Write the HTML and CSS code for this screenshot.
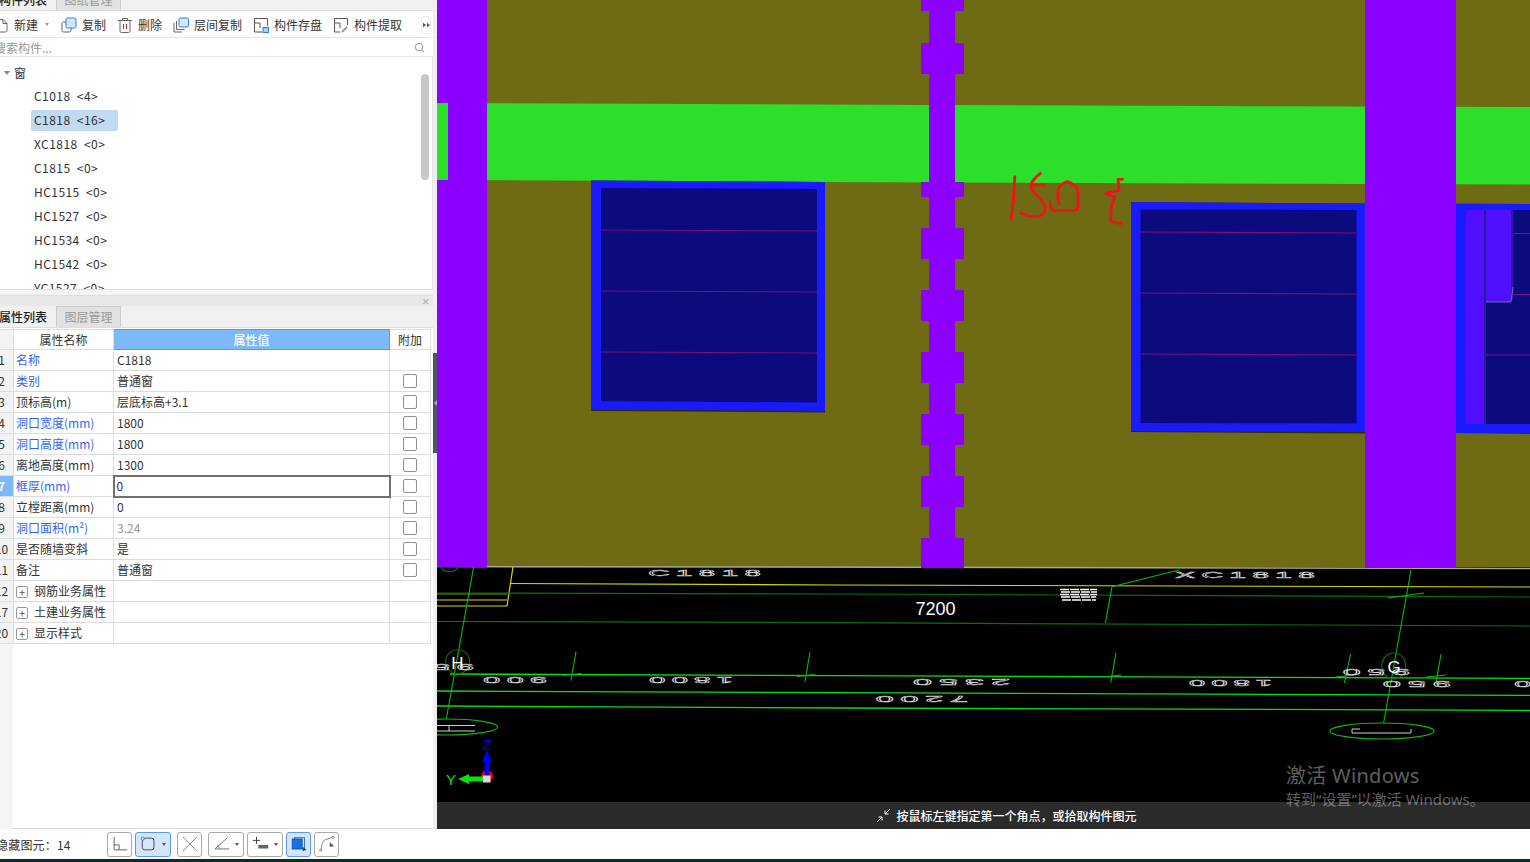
FILE: index.html
```html
<!DOCTYPE html>
<html lang="zh">
<head>
<meta charset="utf-8">
<title>窗 构件</title>
<link rel="stylesheet" href="styles.css">
</head>
<body>
<div class="app">
  <div class="main">
    <aside class="side">
      <div class="panel">
        <div class="tabs tabs-top">
          <span class="tab tab-on tab-clip">构件列表</span>
          <span class="tab tab-off">图纸管理</span>
        </div>
        <div class="toolbar">
          <span class="tool tool-new">
            <svg class="ico" viewBox="0 0 9 16"><path d="M0 2.500h4l4 4v7a1.500 1.500 0 0 1-1.500 1.500H0" fill="none" stroke="#666"/><path d="M4 2.500v4h4" fill="none" stroke="#666"/></svg>
            新建<i class="caret"></i>
          </span>
          <span class="tool">
            <svg class="ico" viewBox="0 0 16 16"><rect x="1" y="5" width="9" height="10" rx="1.500" fill="#fff" stroke="#666"/><rect x="5" y="1" width="10" height="10" rx="1.500" fill="#d6e6fa" stroke="#2f7de0"/></svg>
            复制
          </span>
          <span class="tool">
            <svg class="ico" viewBox="0 0 16 16"><path d="M1 3.500h14M5.500 3.500v-2h5v2M3 3.500v10.500a1.500 1.500 0 0 0 1.500 1.500h7a1.500 1.500 0 0 0 1.500-1.500V3.500" fill="none" stroke="#666"/><path d="M6.500 7v5M9.500 7v5" stroke="#d93030"/></svg>
            删除
          </span>
          <span class="tool">
            <svg class="ico" viewBox="0 0 16 16"><path d="M1 6v9h8M3.500 4v8.500h8" fill="none" stroke="#666"/><rect x="6" y="1" width="9.500" height="9" rx="1.500" fill="#d6e6fa" stroke="#2f7de0"/></svg>
            层间复制
          </span>
          <span class="tool">
            <svg class="ico" viewBox="0 0 16 16"><path d="M9 15H1.500V1.500h13V9M1.500 6H7v5" fill="none" stroke="#555"/><rect x="10" y="10.500" width="5.500" height="5" fill="#a9cdf5" stroke="#2f7de0"/></svg>
            构件存盘
          </span>
          <span class="tool">
            <svg class="ico" viewBox="0 0 16 16"><path d="M7 15H1.500V1.500h13V8M1.500 6H7v5" fill="none" stroke="#555"/><path d="M9 15l5-5" stroke="#999" stroke-width="2"/></svg>
            构件提取
          </span>
          <span class="more"><svg class="more-ico" viewBox="0 0 8 6"><path d="M0 0.500L3.500 3L0 5.500ZM4.500 0.500L8 3L4.500 5.500Z" fill="#555"/></svg></span>
        </div>
        <div class="search">
          <span>搜索构件...</span>
          <svg class="search-ico" viewBox="0 0 12 12"><circle cx="5.500" cy="5.500" r="4" fill="none" stroke="#aaa" stroke-width="1.300"/><path d="M8.500 8.500l2.500 2.500" stroke="#aaa" stroke-width="1.300"/></svg>
        </div>
        <div class="tree">
          <div class="tree-root"><i class="tree-caret"></i>窗</div>
          <div class="tree-item"><span class="label">C1018&nbsp; &lt;4&gt;</span></div>
          <div class="tree-item"><span class="label label-on">C1818&nbsp; &lt;16&gt;</span></div>
          <div class="tree-item"><span class="label">XC1818&nbsp; &lt;0&gt;</span></div>
          <div class="tree-item"><span class="label">C1815&nbsp; &lt;0&gt;</span></div>
          <div class="tree-item"><span class="label">HC1515&nbsp; &lt;0&gt;</span></div>
          <div class="tree-item"><span class="label">HC1527&nbsp; &lt;0&gt;</span></div>
          <div class="tree-item"><span class="label">HC1534&nbsp; &lt;0&gt;</span></div>
          <div class="tree-item"><span class="label">HC1542&nbsp; &lt;0&gt;</span></div>
          <div class="tree-item"><span class="label">YC1527&nbsp; &lt;0&gt;</span></div>
          <span class="tree-thumb"></span>
        </div>
      </div>
      <div class="panel panel-props">
        <div class="props-head"><span class="close">✕</span></div>
        <div class="tabs tabs-props">
          <span class="tab tab-on tab-clip2">属性列表</span>
          <span class="tab tab-off">图层管理</span>
        </div>
        <div class="table-wrap">
          <table class="props">
            <colgroup><col class="c-idx"><col class="c-name"><col class="c-val"><col class="c-add"></colgroup>
            <thead>
              <tr><th class="idx"></th><th>属性名称</th><th class="th-val">属性值</th><th>附加</th></tr>
            </thead>
            <tbody>
              <tr><td class="idx">1</td><td class="blue">名称</td><td>C1818</td><td></td></tr>
              <tr><td class="idx">2</td><td class="blue">类别</td><td>普通窗</td><td class="chk"><i class="box"></i></td></tr>
              <tr><td class="idx">3</td><td>顶标高(m)</td><td>层底标高+3.1</td><td class="chk"><i class="box"></i></td></tr>
              <tr><td class="idx">4</td><td class="blue">洞口宽度(mm)</td><td>1800</td><td class="chk"><i class="box"></i></td></tr>
              <tr><td class="idx">5</td><td class="blue">洞口高度(mm)</td><td>1800</td><td class="chk"><i class="box"></i></td></tr>
              <tr><td class="idx">6</td><td>离地高度(mm)</td><td>1300</td><td class="chk"><i class="box"></i></td></tr>
              <tr><td class="idx idx-on">7</td><td class="blue">框厚(mm)</td><td class="editing">0</td><td class="chk"><i class="box"></i></td></tr>
              <tr><td class="idx">8</td><td>立樘距离(mm)</td><td>0</td><td class="chk"><i class="box"></i></td></tr>
              <tr><td class="idx">9</td><td class="blue">洞口面积(m²)</td><td class="muted">3.24</td><td class="chk"><i class="box"></i></td></tr>
              <tr><td class="idx">10</td><td>是否随墙变斜</td><td>是</td><td class="chk"><i class="box"></i></td></tr>
              <tr><td class="idx">11</td><td>备注</td><td>普通窗</td><td class="chk"><i class="box"></i></td></tr>
              <tr><td class="idx">12</td><td class="group"><i class="plus">+</i>钢筋业务属性</td><td></td><td></td></tr>
              <tr><td class="idx">17</td><td class="group"><i class="plus">+</i>土建业务属性</td><td></td><td></td></tr>
              <tr><td class="idx">20</td><td class="group"><i class="plus">+</i>显示样式</td><td></td><td></td></tr>
            </tbody>
          </table>
          <div class="gutter"></div>
        </div>
      </div>
    </aside>
    <div class="splitter"><span class="handle"><i class="handle-arrow"></i></span></div>
    <section class="viewport">
      <svg class="scene" viewBox="437 0 1093 829" width="1093" height="829">
        <rect x="437" y="0" width="1093" height="829" fill="#000"/>
        <rect x="437" y="0" width="1093" height="567" fill="#6e6b14"/>
        <path d="M437 566.500L1530 568.500" stroke="#a8a890" stroke-width="1.500"/>
        <path d="M437 103L929 105L1530 107V184.500L929 182.500L437 180Z" fill="#2bdf2b"/>
        <!-- first window -->
        <path d="M591 180.500L825 182V412.500L591 411Z" fill="#2e2c10"/>
        <path d="M591 180.500L825 182V411L591 409.500Z" fill="#1a1aff"/>
        <path d="M601 188L817 189V402.500L601 401Z" fill="#0b0b7d"/>
        <path d="M601 230L817 231M601 291L817 292M601 352L817 353" stroke="#7b0f7b" stroke-width="1.200"/>
        <!-- second window -->
        <path d="M1131 202L1365 203.500V433.500L1131 432Z" fill="#2e2c10"/>
        <path d="M1131 202L1365 203.500V432L1131 431Z" fill="#1a1aff"/>
        <path d="M1140.500 209.500L1356.500 210V423.500L1140.500 423Z" fill="#0b0b7d"/>
        <path d="M1140.500 232L1356.500 233M1140.500 293L1356.500 294M1140.500 354L1356.500 355" stroke="#7b0f7b" stroke-width="1.200"/>
        <!-- third window -->
        <path d="M1456 203.500L1530 204V434L1456 433Z" fill="#1a1aff"/>
        <rect x="1466" y="210" width="64" height="214" fill="#0b0b7d"/>
        <rect x="1466" y="210" width="18" height="214" fill="#5010ff"/>
        <rect x="1484" y="210" width="2" height="214" fill="#2a1a9a"/>
        <rect x="1486" y="210" width="25" height="92" fill="#5010ff"/>
        <rect x="1511" y="210" width="2.500" height="90" fill="#2a1a9a"/>
        <path d="M1486 302H1511L1513 287" fill="none" stroke="#7b7bb0" stroke-width=".8"/>
        <path d="M1514 233.500H1530M1514 294.500H1530M1486 355H1530" stroke="#7b0f7b" stroke-width="1.200"/>
        <!-- columns -->
        <rect x="448" y="0" width="39" height="567" fill="#8b00ff"/>
        <rect x="437" y="0" width="11" height="103" fill="#8b00ff"/>
        <rect x="437" y="180" width="11" height="387" fill="#8b00ff"/>
        <rect x="929" y="0" width="26" height="567" fill="#8b00ff"/>
        <path fill="#8b00ff" d="M921 0h43v11h-43zM921 43h43v31h-43zM921 182h43v15h-43zM921 228h43v31h-43zM921 290h43v31h-43zM921 352h43v31h-43zM921 414h43v31h-43zM921 476h43v31h-43zM921 538h43v30h-43z"/>
        <rect x="1365" y="0" width="91" height="568" fill="#8b00ff"/>
        <!-- red sketch -->
        <g fill="none" stroke="#f01414" stroke-width="2.800" stroke-linecap="round" stroke-linejoin="round">
          <path d="M1014.800 176.700Q1014 198 1011.300 219.300"/>
          <path d="M1040.300 173.300Q1031 181 1030.600 186Q1032 191 1037 195Q1045 203 1045.500 209Q1045 214 1039 216Q1030 218 1021 213.300M1033 185H1044.400"/>
          <path d="M1058.900 204Q1057 194 1058.500 188Q1062 183 1067.500 181.700Q1075 184 1077.800 190Q1078.500 200 1077.800 208Q1077 210.500 1072 210.500H1055Q1050 210.500 1050.300 201.700"/>
          <path d="M1122.600 179.300H1118L1119 190.700L1105.400 193.300L1114.700 197.300L1111.200 206.700L1110.500 220Q1111 223 1121.500 223.300"/>
        </g>
        <!-- yellow plan lines -->
        <g fill="none" stroke="#d8d800" stroke-width="1.200">
          <path d="M513 567L507 606H437M507 600H437"/>
          <path d="M510 583.500L837 585L1530 587"/>
          <path d="M437 594H507" stroke="#8a8a00"/>
        </g>
        <!-- dark green lines -->
        <g fill="none" stroke="#0b700b" stroke-width="1.200">
          <path d="M437 593L840 594L1530 597"/>
          <path d="M437 621.500L840 622.700L1530 626"/>
        </g>
        <!-- bright green lines -->
        <g fill="none" stroke="#0fdc0f" stroke-width="1.300">
          <path d="M450 674L840 675.700L1530 678.300"/>
          <path d="M437 691L840 692.700L1530 695.300"/>
          <path d="M437 706L840 708L1530 710.300"/>
        </g>
        <g fill="none" stroke="#10b810" stroke-width="1.100">
          <path d="M576 651.700L571 680.700M810 652L805 681.700M1116 653L1110.700 682.700M1350.600 654L1344.400 683M1441 654L1436 683"/>
          <path d="M563 675.500L581 673.500M797 676.500L815 674.500M1103 677L1121 675M1336 677L1354 675M1426 677L1446 675"/>
          <path d="M473.700 566.700L446.300 719"/>
          <path d="M1411 570L1383.600 723"/>
          <path d="M1112 586.700L1179 570M1112 586.700L1105.400 623"/>
          <path d="M1388 598L1424 593"/>
          <ellipse cx="447" cy="727" rx="50.500" ry="8"/>
          <ellipse cx="1382" cy="731" rx="52" ry="8"/>
        </g>
        <g fill="none" stroke="#0b700b" stroke-width="1.100">
          <circle cx="457.700" cy="661.700" r="12"/>
          <ellipse cx="1393.700" cy="666" rx="12" ry="13"/>
          <path d="M440 565.500a10 9 0 0 0 19 0"/>
        </g>
        <!-- white plan dimensions -->
        <g class="plan">
          <text transform="translate(648 576) scale(1 .65)" textLength="119" lengthAdjust="spacingAndGlyphs">C1818</text>
          <text transform="translate(1175 578) scale(1 .65)" textLength="146" lengthAdjust="spacingAndGlyphs">XC1818</text>
          <text transform="translate(547 677) rotate(180) scale(1 .65)" textLength="70" lengthAdjust="spacingAndGlyphs">900</text>
          <text transform="translate(733 677) rotate(180) scale(1 .65)" textLength="90" lengthAdjust="spacingAndGlyphs">1800</text>
          <text transform="translate(1010 679) rotate(180) scale(1 .65)" textLength="104" lengthAdjust="spacingAndGlyphs">2350</text>
          <text transform="translate(1272 680) rotate(180) scale(1 .65)" textLength="89" lengthAdjust="spacingAndGlyphs">1800</text>
          <text transform="translate(968 696) rotate(180) scale(1 .65)" textLength="99" lengthAdjust="spacingAndGlyphs">7200</text>
          <text transform="translate(1410 669) rotate(180) scale(1 .65)" textLength="74" lengthAdjust="spacingAndGlyphs">950</text>
          <text transform="translate(1451 681) rotate(180) scale(1 .65)" textLength="75" lengthAdjust="spacingAndGlyphs">950</text>
          <text transform="translate(474 664) rotate(180) scale(1 .65)" textLength="72" lengthAdjust="spacingAndGlyphs">950</text>
          <text transform="translate(1531 681) rotate(180) scale(1 .65)" textLength="23" lengthAdjust="spacingAndGlyphs">0</text>
        </g>
        <path d="M1060 589.500H1097M1061 592H1097M1060 594.500H1097M1061 597H1096M1062 600H1096" stroke="#fff" stroke-width="1.600" stroke-dasharray="9 1"/>
        <path d="M437 725.500H475M437 731H475M449 725.500V731M1352 729V733H1411V729M1352 729H1360" fill="none" stroke="#ccc" stroke-width="1"/>
        <text class="grid-label" x="457.500" y="669">H</text>
        <text class="grid-label" x="1394" y="673">G</text>
        <text class="dim" x="935.500" y="615">7200</text>
        <!-- axis gizmo -->
        <circle cx="487" cy="776" r="6" fill="#e00"/>
        <path d="M487 750L492 762H489.500V778H484.500V762H482Z" fill="#0000f0"/>
        <path d="M458 779L469 774V776.500H487V781.500H469V784Z" fill="#0be00b"/>
        <rect x="483" y="775.500" width="7.500" height="7" fill="#ddd"/>
        <text class="axis axis-z" x="487" y="750">Z</text>
        <text class="axis axis-y" x="451" y="785">Y</text>
      </svg>
      <div class="hint">
        <svg class="hint-ico" viewBox="0 0 15 15"><path d="M1 14L6 9M2.500 9H6V12.500M14 1L9 6M12.500 6H9V2.500" fill="none" stroke="#fff" stroke-width="1"/></svg>
        按鼠标左键指定第一个角点，或拾取构件图元
      </div>
      <div class="watermark">
        <div class="wm-1">激活 Windows</div>
        <div class="wm-2">转到“设置”以激活 Windows。</div>
      </div>
    </section>
  </div>
  <footer class="status">
    <span class="hidden-count">隐藏图元：14</span>
    <div class="btns">
      <span class="btn"><svg class="b-ico" viewBox="0 0 20 20"><path d="M3.500 2V16.500H18M3.500 11H9V16.500" fill="none" stroke="#555"/></svg></span>
      <span class="btn btn-wide btn-on"><svg class="b-ico" viewBox="0 0 20 20"><rect x="2.500" y="3.500" width="13" height="13" rx="3" fill="none" stroke="#445"/><circle cx="3" cy="4" r="1.800" fill="#cfe3fb" stroke="#2f7de0"/></svg><i class="btn-caret"></i></span>
      <span class="btn btn-gap"><svg class="b-ico" viewBox="0 0 20 20"><path d="M2 2L18 18M18 2L2 18" stroke="#888"/></svg></span>
      <span class="btn btn-wide btn-gap"><svg class="b-ico" viewBox="0 0 20 20"><path d="M16 3L2 15.500H18" fill="none" stroke="#666"/><path d="M5 11L7.500 15.500" stroke="#888"/></svg><i class="btn-caret"></i></span>
      <span class="btn btn-wide"><svg class="b-ico" viewBox="0 0 20 20"><path d="M1 6H9M5 2V10" stroke="#333"/><rect x="7" y="11" width="11" height="4" fill="#666"/></svg><i class="btn-caret"></i></span>
      <span class="btn btn-on"><svg class="b-ico" viewBox="0 0 20 20"><rect x="5" y="3" width="11" height="12" fill="none" stroke="#1a5fc0"/><rect x="2.500" y="4.500" width="11" height="11" fill="#1670e8" stroke="#0d4fb0"/><path d="M14 13L18.500 16.500L14 18Z" fill="#444"/></svg></span>
      <span class="btn"><svg class="b-ico" viewBox="0 0 20 20"><path d="M3 17L5 8.500Q6 5.500 9 5L17 2.500" fill="none" stroke="#777"/><circle cx="3" cy="17" r="1.200" fill="#fff" stroke="#777"/><circle cx="17" cy="2.500" r="1.200" fill="#fff" stroke="#777"/><path d="M13 8L18 12.500L13 13Z" fill="#555"/></svg></span>
    </div>
  </footer>
  <div class="strip"></div>
</div>
</body>
</html>
```

FILE: styles.css
```css
* { box-sizing: border-box; }
html, body { margin: 0; padding: 0; }
body {
  width: 1530px;
  height: 862px;
  overflow: hidden;
  background: #fff;
  color: #333;
  font: 12px "Noto Sans CJK SC", "Noto Sans", sans-serif;
}
i { font-style: normal; }
.app { display: flex; flex-direction: column; height: 862px; }
.main { display: flex; height: 829px; }
.side { width: 433px; display: flex; flex-direction: column; overflow: hidden; background: #f4f4f4; }
.panel { display: flex; flex-direction: column; background: #fff; }

.tabs { display: flex; height: 22px; background: #f0f0f0; align-items: stretch; flex: none; }
.tabs-top { margin-top: -11px; height: 22px; border-bottom: 1px solid #ddd; }
.tab { display: flex; align-items: center; justify-content: center; width: 65px; font-size: 12px; line-height: 1; }
.tab-on { font-weight: 500; color: #222; width: 57px; }
.tab-off { background: #e2e2e2; color: #999; border: 1px solid #ccc; border-bottom: 0; }
.tab-clip { justify-content: flex-start; margin-left: -1px; }
.tab-clip2 { justify-content: flex-start; margin-left: -1px; }

.toolbar { display: flex; align-items: center; height: 27px; padding-top: 1px; flex: none; position: relative; border-bottom: 1px solid #e6e6e6; background: #fff; }
.tool { display: flex; align-items: center; gap: 5px; margin-right: 11px; white-space: nowrap; font-size: 12px; line-height: 1; }
.tool-new { gap: 6px; margin-left: -1px; margin-right: 12px; }
.ico { width: 16px; height: 16px; flex: none; }
.tool-new .ico { width: 9px; }
.caret { display: block; width: 0; height: 0; margin-left: 1px; border: 2.500px solid transparent; border-top: 3px solid #999; border-bottom: 0; }
.more { position: absolute; left: 421px; top: 5px; width: 10px; height: 18px; display: flex; align-items: center; justify-content: center; background: #fff; border: 1px solid #eee; border-radius: 3px; }
.more-ico { width: 7px; height: 6px; flex: none; }

.search { display: flex; align-items: center; justify-content: space-between; height: 19px; padding: 1px 8px 0 0; border-bottom: 1px solid #e6e6e6; color: #999; flex: none; }
.search > span { margin-left: -6px; }
.search-ico { width: 11px; height: 11px; }

.tree { position: relative; height: 233px; overflow: hidden; padding-top: 3px; border-bottom: 1px solid #ddd; border-right: 1px solid #e6e6e6; flex: none; }
.tree-root { height: 23px; padding: 3px 0 0 4px; line-height: 20px; display: flex; align-items: center; }
.tree-caret { display: block; width: 0; height: 0; margin-right: 4px; border: 3.500px solid transparent; border-top: 4px solid #888; border-bottom: 0; }
.tree-item { height: 24px; display: flex; align-items: flex-end; padding-left: 31px; }
.label { display: block; height: 21px; line-height: 20px; padding: 0 13px 0 3px; border-radius: 2px; white-space: nowrap; letter-spacing: .45px; }
.label-on { background: #c2d9f2; }
.tree-thumb { position: absolute; left: 421px; top: 17px; width: 8px; height: 106px; background: #c8c8c8; border-radius: 4px; }

.panel-props { flex: 1; margin-top: 5px; min-height: 0; }
.props-head { display: flex; justify-content: flex-end; align-items: center; height: 11px; padding-right: 3px; background: #e8e8e8; border-top: 1px solid #ddd; flex: none; }
.close { font-size: 9px; line-height: 1; color: #aaa; }
.tabs-props { height: 22px; border-bottom: 1px solid #ddd; }

.table-wrap { position: relative; flex: 1; display: flex; flex-direction: column; min-height: 0; }
.props { border-collapse: collapse; table-layout: fixed; width: 441px; margin: 1px 0 0 -11px; flex: none; }
.c-idx { width: 24px; }
.c-name { width: 100px; }
.c-val { width: 276px; }
.c-add { width: 41px; }
.props th, .props td {
  height: 21px;
  padding: 0 0 0 3px;
  border: 1px solid #ddd;
  font-weight: 400;
  font-size: 12px;
  line-height: 1;
  white-space: nowrap;
  overflow: hidden;
}
.props td:nth-child(2) { padding-left: 2px; }
.props th { text-align: center; padding: 0; height: 20px; }
.props th.th-val { background: #7db8f7; color: #fff; font-weight: 500; border-color: #5d9ae0; }
.props .idx { background: #f3f3f3; text-align: center; padding: 0; font-size: 12px; }
.props .idx-on { background: #7db8f7; color: #fff; font-weight: 700; }
.props td.blue { color: #3366ee; }
.props td.muted { color: #999; }
.props td.editing { border: 2px solid #707070; padding-left: 2px; }
.props td.chk { padding: 0; text-align: center; }
.box { display: block; width: 14px; height: 14px; margin: 0 auto; border: 1px solid #8f8f8f; border-radius: 2px; background: #fff; }
.plus { display: inline-block; width: 12px; height: 12px; margin-right: 6px; line-height: 10px; font-size: 11px; text-align: center; border: 1px solid #999; border-radius: 2px; color: #555; vertical-align: -1px; }
.gutter { width: 13px; flex: 1; background: #f5f5f5; }

.splitter { width: 4px; background: #f0f0f0; flex: none; display: flex; flex-direction: column; }
.handle { display: flex; align-items: center; justify-content: flex-end; height: 100px; margin-top: 353px; background: #4e5862; }
.handle-arrow { display: block; width: 0; height: 0; border: 3px solid transparent; border-right: 3px solid #aab; border-left: 0; }

.viewport { position: relative; flex: 1; min-width: 0; overflow: hidden; background: #000; }
.scene { display: block; }
.plan text {
  font-family: "Liberation Sans", sans-serif;
  font-size: 15px;
  letter-spacing: 3px;
  fill: none;
  stroke: #dcdcdc;
  stroke-width: .7;
}
.grid-label { font: 400 17px "Liberation Sans", sans-serif; fill: #fff; text-anchor: middle; }
.dim { font: 400 18px "Liberation Sans", sans-serif; fill: #fff; text-anchor: middle; }
.axis { font: 400 15px "Liberation Sans", sans-serif; text-anchor: middle; }
.axis-z { fill: #0000f0; }
.axis-y { fill: #0be00b; }

.hint { position: absolute; left: 0; right: 0; bottom: 0; height: 27px; display: flex; align-items: center; justify-content: center; gap: 5px; padding-left: 46px; background: #2b2b2b; color: #fff; font-weight: 500; font-size: 12px; }
.hint-ico { width: 15px; height: 15px; }
.watermark { position: absolute; left: 849px; top: 761px; color: rgba(255,255,255,.38); line-height: 1; white-space: nowrap; font-family: "Noto Sans", "Noto Sans CJK SC", sans-serif; }
.wm-1 { font-size: 20px; height: 29px; display: flex; align-items: center; letter-spacing: .3px; }
.wm-2 { font-size: 15px; height: 18px; display: flex; align-items: center; }

.status { display: flex; align-items: center; flex: none; background: #fff; border-top: 1px solid #ddd; margin-top: -1px; height: 31px; }
.hidden-count { width: 106px; margin-left: -4px; flex: none; white-space: nowrap; letter-spacing: .2px; }
.btns { display: flex; gap: 3px; margin-left: 5px; }
.btn { display: flex; align-items: center; justify-content: center; gap: 4px; width: 25px; height: 25px; border: 1px solid #aaa; border-radius: 3px; background: #fff; flex: none; }
.btn-wide { width: 36px; }
.btn-on { background: #d5e5fa; border-color: #5a9ae8; }
.btn-gap { margin-left: 3px; }
.b-ico { width: 18px; height: 18px; flex: none; }
.btn-caret { display: block; width: 0; height: 0; border: 2.500px solid transparent; border-top: 3px solid #555; border-bottom: 0; }
.strip { height: 3px; background: #0e2a2e; flex: none; }
```
